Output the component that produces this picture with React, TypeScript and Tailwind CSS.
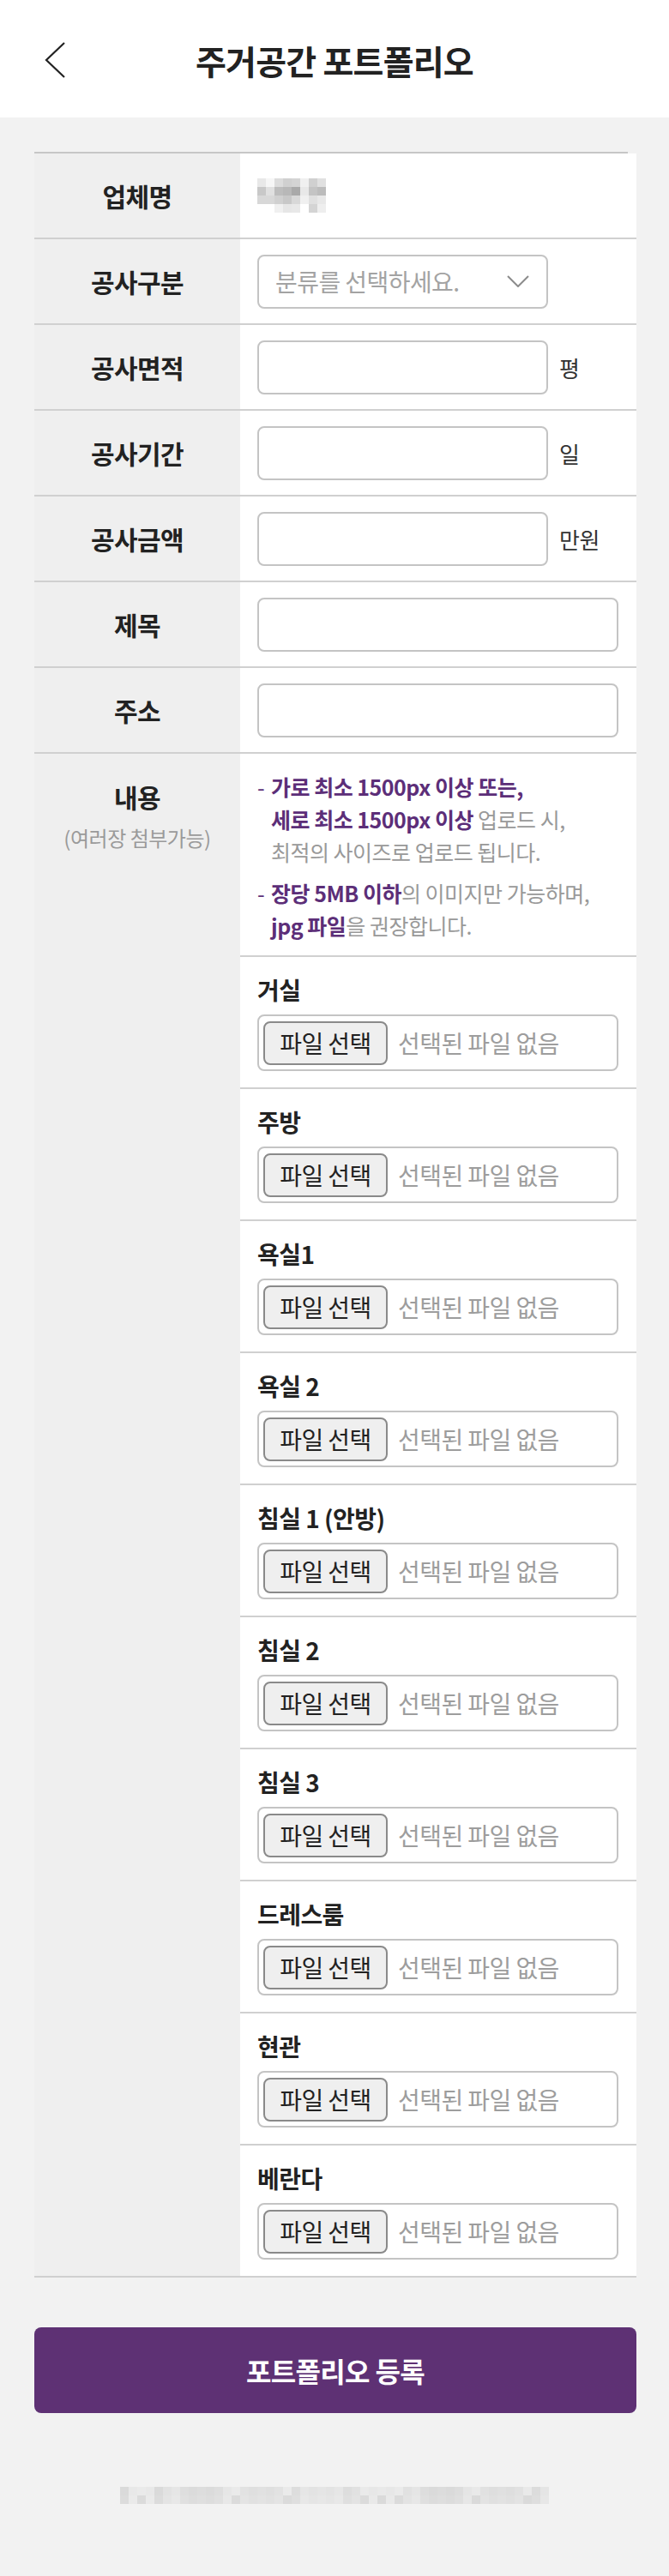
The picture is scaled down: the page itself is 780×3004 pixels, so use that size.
import React from 'react';

const NAME_MOSAIC = [
  ['#e8e8e8', '#f6f6f6', '#dcdcdc', '#d0d0d0', '#d4d4d4', '#f0f0f0', '#d0d0d0', '#e0e0e0'],
  ['#c8c8c8', '#e0e0e0', '#bdbdbd', '#b8b8b8', '#a9a9a9', '#e8e8e8', '#c4c4c4', '#bcbcbc'],
  ['#d8d8d8', '#d8d8d8', '#d0d0d0', '#c8c8c8', '#d8d8d8', '#f0f0f0', '#e0e0e0', '#e8e8e8'],
  ['#ffffff', '#ffffff', '#f0f0f0', '#e6e6e6', '#e8e8e8', '#ffffff', '#d4d4d4', '#eeeeee'],
];

// pixelated footer (company info), light grays only
const footerCell = (r: number, c: number) => {
  const v = (c * 37 + r * 53 + ((c * c) % 7) * 11) % 17;
  const g = 0xda + v;
  const h = g.toString(16);
  return `#${h}${h}${h}`;
};

const FIELDS: { label: string; kind: 'name' | 'select' | 'short' | 'long'; unit?: string }[] = [
  { label: '업체명', kind: 'name' },
  { label: '공사구분', kind: 'select' },
  { label: '공사면적', kind: 'short', unit: '평' },
  { label: '공사기간', kind: 'short', unit: '일' },
  { label: '공사금액', kind: 'short', unit: '만원' },
  { label: '제목', kind: 'long' },
  { label: '주소', kind: 'long' },
];

const ROOMS = ['거실', '주방', '욕실1', '욕실 2', '침실 1 (안방)', '침실 2', '침실 3', '드레스룸', '현관', '베란다'];

const FieldValue: React.FC<{ kind: string; unit?: string }> = ({ kind, unit }) => {
  if (kind === 'name') {
    return (
      <div className="flex flex-col">
        {NAME_MOSAIC.map((row, r) => (
          <div key={r} className="flex">
            {row.map((c, i) => (
              <div key={i} className="w-[10px] h-[10px]" style={{ backgroundColor: c }} />
            ))}
          </div>
        ))}
      </div>
    );
  }
  if (kind === 'select') {
    return (
      <div className="w-[339px] h-[63px] border-2 border-[#c4c4c4] rounded-[8px] flex items-center justify-between pl-[19px] pr-[20px]">
        <span className="text-[28px] text-[#a3a3a3] tracking-[-0.02em] leading-none">분류를 선택하세요.</span>
        <svg width="26" height="14" viewBox="0 0 26 14" fill="none">
          <polyline points="1,1 13,13 25,1" stroke="#8c8c8c" strokeWidth="2" />
        </svg>
      </div>
    );
  }
  if (kind === 'short') {
    return (
      <div className="flex items-center">
        <div className="w-[339px] h-[63px] border-2 border-[#c4c4c4] rounded-[8px] bg-white" />
        <span className="ml-[13px] text-[26px] text-[#333] tracking-[-0.02em]">{unit}</span>
      </div>
    );
  }
  return <div className="w-[421px] h-[63px] border-2 border-[#c4c4c4] rounded-[8px] bg-white" />;
};

const FileRow: React.FC<{ label: string; last: boolean }> = ({ label, last }) => (
  <div className={`pt-[18px] pb-[19px] pl-[20px] ${last ? '' : 'border-b-2 border-[#d0d0d0]'}`}>
    <div className="text-[28px] leading-[40px] font-bold text-[#222] tracking-[-0.02em]">{label}</div>
    <div className="mt-[9px] w-[421px] h-[66px] border-2 border-[#c4c4c4] rounded-[8px] flex items-center pl-[5px]">
      <div className="w-[145px] h-[51px] bg-[#efefef] border-2 border-[#8a8a8a] rounded-[8px] flex items-center justify-center text-[28px] text-[#222] tracking-[-0.02em]">
        파일 선택
      </div>
      <span className="ml-[12px] text-[28px] text-[#9d9d9d] tracking-[-0.02em]">선택된 파일 없음</span>
    </div>
  </div>
);

const App: React.FC = () => {
  return (
    <div className="min-h-[3004px] bg-[#f2f2f2] font-['Noto_Sans_CJK_KR','Noto_Sans',sans-serif]">
      {/* Header */}
      <header className="h-[137px] bg-white grid grid-cols-[120px_1fr_120px] items-center">
        <div className="pl-[52px] pt-[2px]">
          <svg width="26" height="42" viewBox="0 0 26 42" fill="none">
            <polyline points="23,1 2,21 23,41" stroke="#222" strokeWidth="2.2" />
          </svg>
        </div>
        <h1 className="text-center text-[39px] font-bold text-[#222] tracking-[-0.02em] pt-[4px]">주거공간 포트폴리오</h1>
        <div />
      </header>

      <main className="ml-[40px] mr-[38px] pt-[40px]">
        {/* Form table */}
        <div className="h-[2px] bg-[#c6c6c6] mr-[10px]" />
        {FIELDS.map((f) => (
          <div key={f.label} className="flex h-[100px] border-b-2 border-[#d0d0d0]">
            <div className="w-[240px] bg-[#efefef] flex items-center justify-center text-[30px] font-bold text-[#222] tracking-[-0.02em]">
              {f.label}
            </div>
            <div className="flex-1 bg-white flex items-center pl-[20px]">
              <FieldValue kind={f.kind} unit={f.unit} />
            </div>
          </div>
        ))}

        {/* Contents / photos */}
        <div className="flex border-b-2 border-[#d0d0d0]">
          <div className="w-[240px] bg-[#efefef] pt-[30px] flex flex-col items-center">
            <div className="text-[30px] leading-[40px] font-bold text-[#222] tracking-[-0.02em]">내용</div>
            <div className="mt-[11px] text-[24px] leading-[34px] text-[#9a9a9a] tracking-[-0.02em]">(여러장 첨부가능)</div>
          </div>
          <div className="flex-1 bg-white">
            <div className="pt-[19px] pb-[16px] pl-[20px] border-b-2 border-[#d0d0d0] text-[25px] leading-[38px] tracking-[-0.02em] text-[#999]">
              <div className="flex">
                <span className="w-[16px] shrink-0 text-[#5c2e78]">-</span>
                <div className="whitespace-nowrap">
                  <b className="text-[#5c2e78]">가로 최소 1500px 이상 또는,</b>
                  <br />
                  <b className="text-[#5c2e78]">세로 최소 1500px 이상</b> 업로드 시,
                  <br />
                  최적의 사이즈로 업로드 됩니다.
                </div>
              </div>
              <div className="flex mt-[10px]">
                <span className="w-[16px] shrink-0 text-[#5c2e78]">-</span>
                <div className="whitespace-nowrap">
                  <b className="text-[#5c2e78]">장당 5MB 이하</b>의 이미지만 가능하며,
                  <br />
                  <b className="text-[#5c2e78]">jpg 파일</b>을 권장합니다.
                </div>
              </div>
            </div>
            {ROOMS.map((r, i) => (
              <FileRow key={r} label={r} last={i === ROOMS.length - 1} />
            ))}
          </div>
        </div>

        {/* Submit */}
        <button className="mt-[58px] w-full h-[100px] rounded-[8px] bg-[#5e3174] text-white text-[32px] font-bold tracking-[-0.02em]">
          포트폴리오 등록
        </button>

        {/* Footer (pixelated) */}
        <div className="mt-[86px] flex flex-col items-center mr-[2px]">
          {[0, 1].map((r) => (
            <div key={r} className="flex">
              {Array.from({ length: 50 }).map((_, c) => (
                <div key={c} className="w-[10px] h-[10px]" style={{ backgroundColor: footerCell(r, c) }} />
              ))}
            </div>
          ))}
        </div>
      </main>
    </div>
  );
};

export default App;
